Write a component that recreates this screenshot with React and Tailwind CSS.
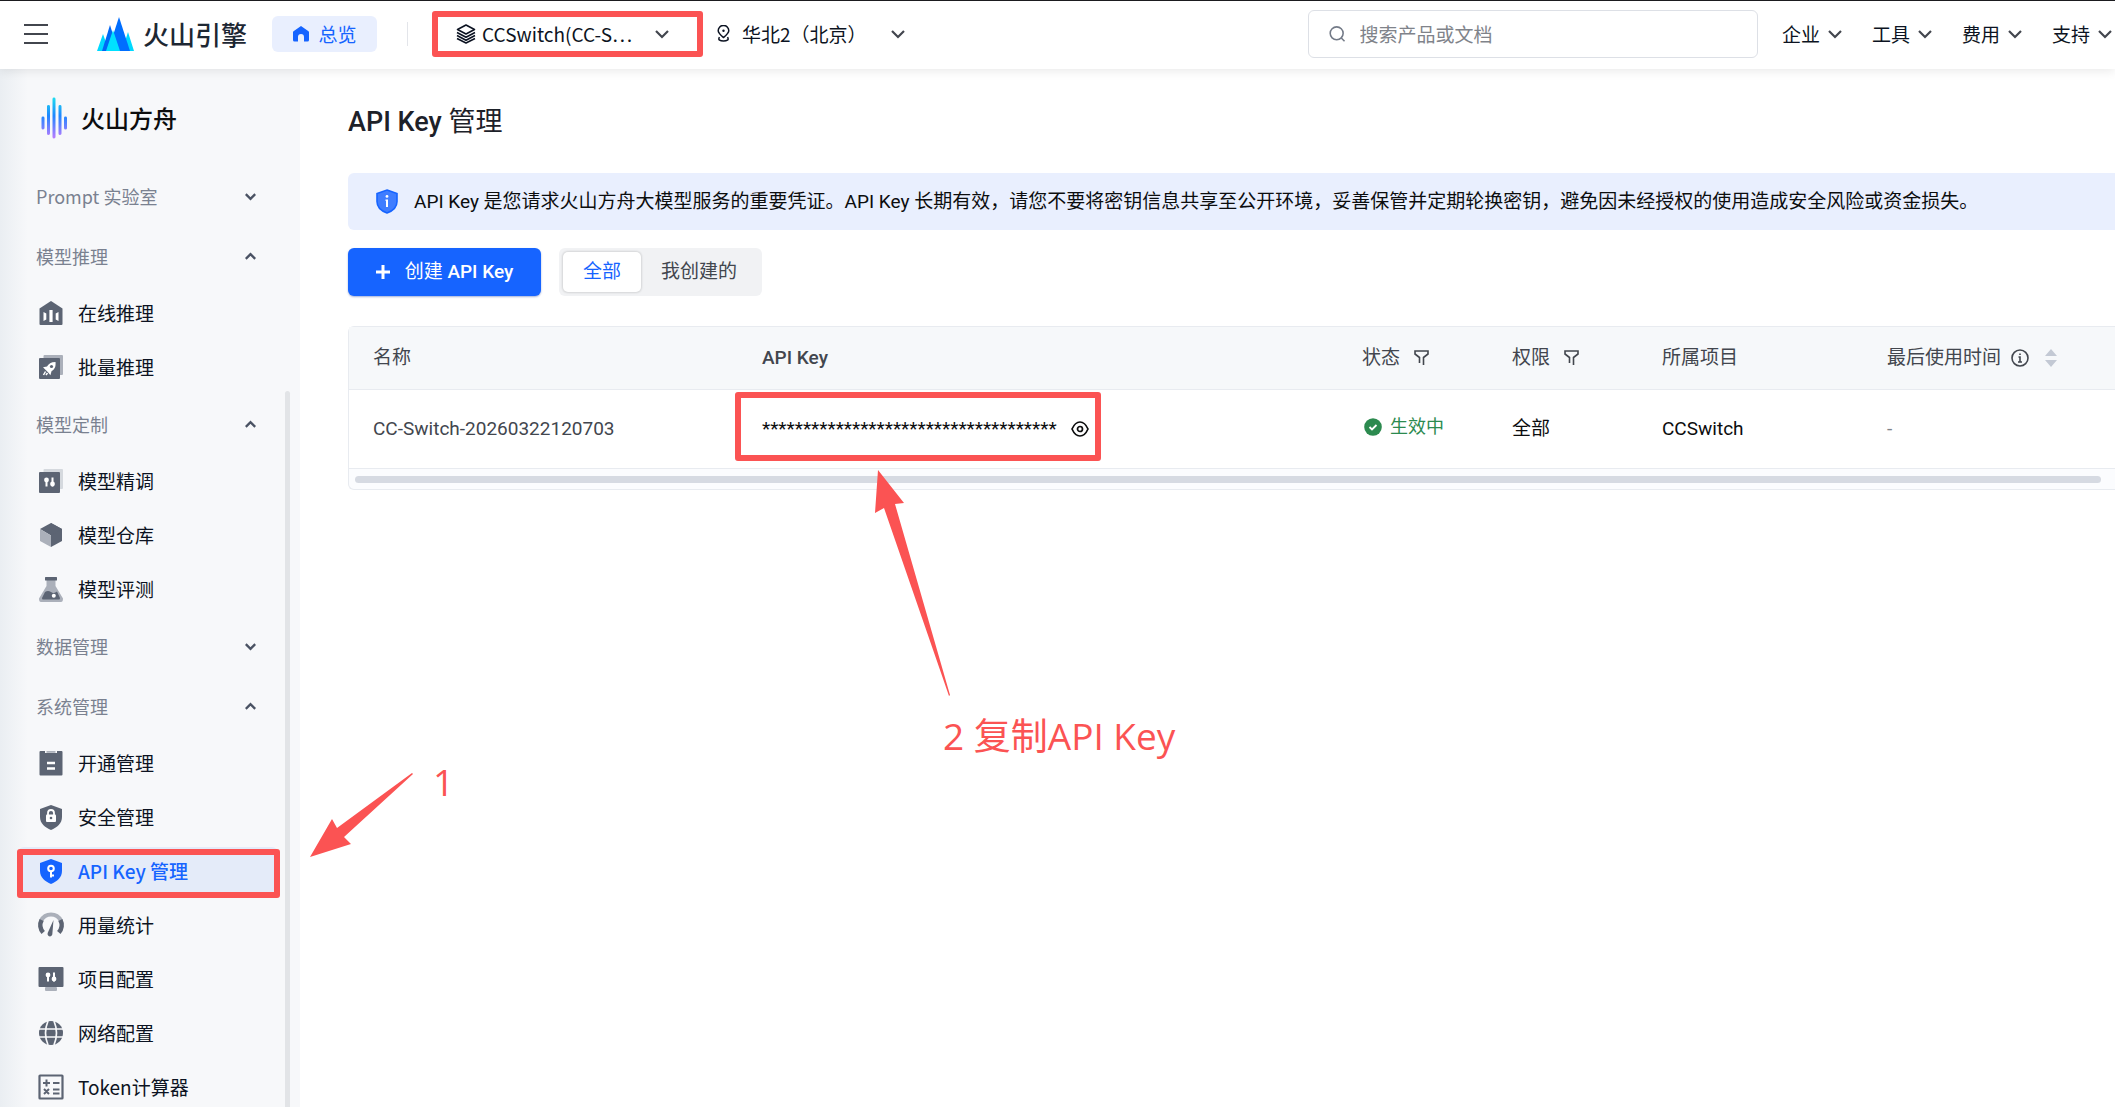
import React, { useState } from 'react';

const SLATE = '#5c6473';
const MUTED = '#abb0ba';

function Chevron({ size = 14, up = false, color = '#42464e', width = 2.2 }) {
  return (
    <svg width={size} height={size} viewBox="0 0 14 14" fill="none" stroke={color} strokeWidth={width} className="shrink-0" aria-hidden="true">
      <path d={up ? 'M1 10l6-6 6 6' : 'M1 4l6 6 6-6'} />
    </svg>
  );
}

function Sliders() {
  return (
    <g fill="none" stroke="#fff" strokeWidth="2">
      <path d="M7.5 7.5v8M13.5 6.5v9" />
      <circle cx="7.5" cy="9" r="1.4" fill="#fff" />
      <circle cx="13.5" cy="13" r="1.4" fill="#fff" />
    </g>
  );
}

const icons = {
  online: (
    <>
      <path d="M12 0l11.5 7.5V23a1 1 0 0 1-1 1h-21a1 1 0 0 1-1-1V7.5z" fill={SLATE} />
      <path d="M4.5 11l2.8 1.5v6L4.5 20zM10.4 9h3.2v12h-3.2zM19.5 11l-2.8 1.5v6l2.8 1.5z" fill="#fff" />
    </>
  ),
  batch: (
    <>
      <rect x="4.5" y="0" width="19.5" height="20" rx="1" fill={MUTED} />
      <rect x="0" y="3" width="21" height="21" rx="1" fill={SLATE} />
      <path d="M16.5 7c-4.5 0-7 1.8-8.5 4.5l-4 .8 2.2 2.2 2.8 2.8 2.4 3 1.2-4.3C15.5 14.5 17 12 16.5 7z" fill="#fff" />
      <circle cx="12.5" cy="11.5" r="1.6" fill={SLATE} />
      <path d="M6.5 16.5l-2 3.5M8.5 18l-1.5 2" stroke="#fff" strokeWidth="1.5" />
    </>
  ),
  tune: (
    <>
      <rect x="4.5" y="0" width="19.5" height="20" rx="1" fill="#d5d9de" />
      <rect x="0" y="3" width="21" height="21" rx="1" fill={SLATE} />
      <g transform="translate(0 2)"><Sliders /></g>
    </>
  ),
  store: (
    <>
      <path d="M12 0l11 6v12l-11 6z" fill={SLATE} />
      <path d="M12 0L1 6l11 6.5L23 6z" fill={SLATE} />
      <path d="M1 6l11 6.5V24L1 18z" fill={MUTED} />
    </>
  ),
  flask: (
    <>
      <path d="M7.5 3h9v6L24 21.5Q24 25 22 25H2Q0 25 0 21.5L7.5 9z" fill={MUTED} />
      <rect x="6" y="0" width="12" height="3.5" rx="0.5" fill={SLATE} />
      <path d="M6 15q3-2 6 0t6-.5l3 6.500q0 1.500-1 1.500H4q-1 0-1-1.500z" fill={SLATE} />
      <circle cx="14.8" cy="18.8" r="2" fill="#fff" />
    </>
  ),
  open: (
    <>
      <path d="M1.5 0H6v2h12V0h4.5q1 0 1 1v22.500q0 1-1 1h-21q-1 0-1-1V1q0-1 1-1z" fill={SLATE} />
      <path d="M7.5 0h9v1.8h-9z" fill={MUTED} />
      <path d="M8 12h8M8 17.5h8" stroke="#fff" strokeWidth="2.4" />
    </>
  ),
  security: (
    <>
      <path d="M12 0l11 4v8c0 6.5-5 10.500-11 13C6 22.500 1 18.500 1 12V4z" fill={SLATE} />
      <rect x="7" y="9.5" width="10" height="7.5" rx="1" fill="#fff" />
      <path d="M9 10V8a3 3 0 0 1 6 0v2" fill="none" stroke="#fff" strokeWidth="1.8" />
      <circle cx="12" cy="13" r="1.3" fill={SLATE} />
    </>
  ),
  key: (
    <>
      <path d="M12 0l11 4v8c0 6.5-5 10.500-11 13C6 22.500 1 18.500 1 12V4z" fill="#1664ff" />
      <circle cx="12" cy="9.5" r="2.8" fill="none" stroke="#fff" strokeWidth="2" />
      <path d="M12 12v6.500M12 16.500h3" stroke="#fff" strokeWidth="2" />
    </>
  ),
  usage: (
    <>
      <path d="M2.2 7.5a11 11 0 0 1 19.600 0" fill="none" stroke={MUTED} strokeWidth="4.2" />
      <path d="M2.6 7A11 11 0 0 0 4.200 19.500M21.400 7A11 11 0 0 1 19.800 19.500" fill="none" stroke={SLATE} strokeWidth="4.6" />
      <path d="M14.5 7l-1.200 14.500a2.400 2.400 0 0 1-4.600.3c-.3-1 0-1.800.3-2.600z" fill={SLATE} />
    </>
  ),
  project: (
    <>
      <rect x="-0.5" y="0" width="25" height="20" rx="1" fill={SLATE} />
      <rect x="6" y="20" width="12" height="4" rx="1" fill={MUTED} />
      <g transform="translate(1.5 -1)"><Sliders /></g>
    </>
  ),
  network: (
    <>
      <circle cx="12" cy="12" r="12" fill={SLATE} />
      <g fill="none" stroke="#f7f8fa" strokeWidth="1.7">
        <path d="M0 8h24M0 16h24" />
        <path d="M9 0Q4 12 9 24M15 0q5 12 0 24" />
      </g>
    </>
  ),
  token: (
    <>
      <rect x="0.5" y="0.5" width="23" height="23" rx="0.5" fill="none" stroke={SLATE} strokeWidth="2.2" />
      <g stroke={SLATE} strokeWidth="2">
        <path d="M4 8h7M7.5 4.5v7M14 8h6.5M14 14.5h6.5M14 18.5h6.5M5 14l5 5M10 14l-5 5" />
      </g>
    </>
  ),
};

const menu = [
  { title: 'Prompt 实验室', open: false, items: [] },
  {
    title: '模型推理',
    open: true,
    items: [
      { icon: 'online', label: '在线推理' },
      { icon: 'batch', label: '批量推理' },
    ],
  },
  {
    title: '模型定制',
    open: true,
    items: [
      { icon: 'tune', label: '模型精调' },
      { icon: 'store', label: '模型仓库' },
      { icon: 'flask', label: '模型评测' },
    ],
  },
  { title: '数据管理', open: false, items: [] },
  {
    title: '系统管理',
    open: true,
    items: [
      { icon: 'open', label: '开通管理' },
      { icon: 'security', label: '安全管理' },
      { icon: 'key', label: 'API Key 管理', active: true },
      { icon: 'usage', label: '用量统计' },
      { icon: 'project', label: '项目配置' },
      { icon: 'network', label: '网络配置' },
      { icon: 'token', label: 'Token计算器' },
    ],
  },
];

const topLinks = ['企业', '工具', '费用', '支持'];

const keys = [
  { name: 'CC-Switch-20260322120703', status: '生效中', scope: '全部', project: 'CCSwitch', lastUsed: '-' },
];

function Header() {
  return (
    <header className="relative z-10 flex h-[69px] shrink-0 items-center border-t border-[#1b1b1f] bg-white pb-[3px] shadow-[0_2px_10px_rgba(0,0,0,0.09)]">
      <button type="button" aria-label="菜单" className="ml-6 shrink-0">
        <svg width="24" height="20" viewBox="0 0 24 20" stroke="#42464e" strokeWidth="2">
          <path d="M0 1h24M0 10h24M0 19h24" />
        </svg>
      </button>
      <a href="#home" className="ml-[49px] flex shrink-0 items-center gap-[9px] text-[26px] leading-8 font-medium text-[#1d2733]">
        <svg width="37" height="34" viewBox="0 0 37 34" aria-hidden="true">
          <path d="M6 17l6 17H0zM31 15l6 19H25z" fill="#00d9ff" />
          <path d="M13 8l8 26H5z" fill="#0067f5" />
          <path d="M22 0l11 34H11z" fill="#006eff" />
          <path d="M16 13l7 21H9z" fill="#00e0ff" />
        </svg>
        火山引擎
      </a>
      <a href="#overview" className="ml-[25px] flex h-9 w-[105px] shrink-0 items-center justify-center gap-[10px] rounded-md bg-[#e9effe] text-[19px] leading-7 text-[#1664ff]">
        <svg width="16" height="16" viewBox="0 0 16 16" fill="#1664ff" aria-hidden="true">
          <path d="M8 0l7.5 5.3q.5.4.5 1V14q0 1.500-1.500 1.500H11V11a3 3 0 0 0-6 0v4.500H1.500Q0 15.500 0 14V6.300q0-.6.5-1z" />
        </svg>
        总览
      </a>
      <span className="ml-[30px] h-6 w-px shrink-0 bg-[#e3e5ea]" />
      <div className="relative ml-12 shrink-0">
        <button type="button" className="flex items-center text-[19px] leading-7 text-[#0c1322]">
          <svg width="20" height="20" viewBox="0 0 20 20" fill="none" stroke="#0c1322" strokeWidth="1.6" strokeLinejoin="round" aria-hidden="true">
            <path d="M10 1l8.5 4.5L10 10 1.5 5.5zM1 8.5l9 4.7 9-4.7M1 11.5l9 4.7 9-4.7M1 14.5l9 4.5 9-4.5" />
          </svg>
          <span className="ml-[6px] w-[173px] text-left whitespace-nowrap">CCSwitch(CC-S⋯</span>
          <Chevron />
        </button>
        <span className="pointer-events-none absolute -top-[9px] -right-[34px] -bottom-[9px] -left-6 rounded-[3px] border-6 border-[#fb5353]" />
      </div>
      <button type="button" className="ml-12 flex shrink-0 items-center text-[19px] leading-7 text-[#0c1322]">
        <svg width="13" height="17" viewBox="0 0 13 17" fill="none" stroke="#0c1322" strokeWidth="1.5" aria-hidden="true">
          <path d="M6.5 12.5C3 9.5 1.2 8 1.2 5.7a5.3 5.3 0 0 1 10.600 0c0 2.300-1.800 3.800-5.300 6.800zM2.500 12.200c-2 3 1 3.800 4 3.800s6-.8 4-3.800" />
          <circle cx="6.5" cy="5.7" r="1.2" fill="#0c1322" stroke="none" />
        </svg>
        <span className="mr-6 ml-3">华北2（北京）</span>
        <Chevron />
      </button>
      <div className="ml-auto flex shrink-0 items-center pr-[3px]">
        <label className="mr-6 flex h-12 w-[450px] items-center rounded-md border border-[#dde0e6] px-5">
          <svg width="18" height="18" viewBox="0 0 18 18" fill="none" stroke="#737a87" strokeWidth="1.7" aria-hidden="true">
            <circle cx="8.3" cy="8.3" r="7" />
            <path d="M13.3 13.3l3.5 3.5" />
          </svg>
          <input type="text" aria-label="搜索" placeholder="搜索产品或文档" className="ml-[14px] w-full text-[19px] leading-7 outline-none placeholder:text-[#80838a]" />
        </label>
        <nav className="flex gap-[30px]">
          {topLinks.map((label) => (
            <button key={label} type="button" className="flex items-center gap-2 text-[19px] leading-7 text-[#0c1322]">
              {label}
              <Chevron />
            </button>
          ))}
        </nav>
      </div>
    </header>
  );
}

function Sidebar() {
  return (
    <aside className="flex w-[300px] shrink-0 overflow-hidden bg-[#f7f8fa] bg-[linear-gradient(90deg,#eaeef2_0,#f7f8fa_28px)]">
      <div className="min-w-0 flex-1">
        <div className="flex h-[97px] items-center gap-[14px] pl-[41px] text-2xl font-medium text-[#0c0d0e]">
          <svg width="26" height="42" viewBox="0 0 26 42" fill="none" stroke="url(#ark)" strokeWidth="3" strokeLinecap="round" aria-hidden="true">
            <defs>
              <linearGradient id="ark" x1="0" y1="0" x2="0" y2="42" gradientUnits="userSpaceOnUse">
                <stop offset="0" stopColor="#1fe0ee" />
                <stop offset="0.45" stopColor="#1f86ff" />
                <stop offset="1" stopColor="#c07bff" />
              </linearGradient>
            </defs>
            <path d="M2 21l.01 10M7.5 9.5l.01 27M13 2l.01 38M19 9.500l.01 27M24.500 21l.01 10" />
          </svg>
          火山方舟
        </div>
        <nav>
          {menu.map((group) => (
            <section key={group.title}>
              <button type="button" aria-expanded={group.open} className="flex h-[60px] w-full items-center justify-between pr-[29px] pl-9 text-lg text-[#7a8190]">
                {group.title}
                <Chevron size={11} up={group.open} color="#4a5263" width={3} />
              </button>
              <ul>
                {group.items.map((item) => (
                  <li key={item.label} className="py-[3px] pr-[7px] pl-[18px]">
                    <a
                      href={`#${item.icon}`}
                      className={`flex h-12 items-center gap-[15px] rounded-md pl-[21px] text-[19px] leading-7 ${item.active ? 'bg-[#e4ebf9] font-medium text-[#1664ff]' : 'text-[#0c1322]'}`}
                    >
                      <svg width="24" height="24" viewBox="0 0 24 24" className="shrink-0 overflow-visible" aria-hidden="true">
                        {icons[item.icon]}
                      </svg>
                      {item.label}
                    </a>
                  </li>
                ))}
              </ul>
            </section>
          ))}
        </nav>
      </div>
      <div className="mt-[322px] mr-[10px] w-[5px] shrink-0 rounded-t-full bg-[#e2e4e7]" />
    </aside>
  );
}

function FilterIcon() {
  return (
    <svg width="15" height="15" viewBox="0 0 15 15" fill="none" stroke="#42464e" strokeWidth="1.6" aria-hidden="true">
      <path d="M5.5 13V7.5L1 4V1h13v3l-4.500 3.500V15" />
    </svg>
  );
}

function KeyTable() {
  return (
    <div className="mt-[30px] rounded-l-md border-y border-l border-[#e8ebf0] bg-[#fbfcfe]">
      <table className="w-full table-fixed border-collapse text-left text-[19px] leading-7">
        <colgroup>
          <col className="w-[389px]" />
          <col />
          <col className="w-[150px]" />
          <col className="w-[150px]" />
          <col className="w-[225px]" />
          <col className="w-[252px]" />
        </colgroup>
        <thead className="bg-[#f6f8fa] text-[#42464e]">
          <tr className="h-[62px] border-b border-[#e8ebf0]">
            <th className="pl-6 font-normal">名称</th>
            <th className="pl-6 font-medium">API Key</th>
            <th className="pl-6 font-normal">
              <span className="flex items-center gap-[14px]">状态 <FilterIcon /></span>
            </th>
            <th className="pl-6 font-normal">
              <span className="flex items-center gap-[14px]">权限 <FilterIcon /></span>
            </th>
            <th className="pl-6 font-normal">所属项目</th>
            <th className="pl-6 font-normal">
              <span className="flex items-center">
                最后使用时间
                <svg width="18" height="18" viewBox="0 0 18 18" fill="none" stroke="#42464e" strokeWidth="1.6" className="ml-[10px]" aria-hidden="true">
                  <circle cx="9" cy="9" r="8" />
                  <path d="M7.5 8H9v5M7 13h4M8.200 5.200h1.600" />
                </svg>
                <svg width="12" height="18" viewBox="0 0 12 18" fill="#c3c9d4" className="ml-4" aria-hidden="true">
                  <path d="M6 0l6 7H0zM6 18l6-7H0z" />
                </svg>
              </span>
            </th>
          </tr>
        </thead>
        <tbody className="bg-white text-[#0c0d0e]">
          {keys.map((row) => (
            <tr key={row.name} className="h-[79px] border-b border-[#e8ebf0]">
              <td className="pl-6 text-[#42464e]">{row.name}</td>
              <td className="pl-6">
                <span className="relative inline-flex items-center gap-[14px]">
                  {'*'.repeat(36)}
                  <button type="button" aria-label="显示">
                    <svg width="18" height="16" viewBox="0 0 18 16" fill="none" stroke="#0c0d0e" strokeWidth="1.7" aria-hidden="true">
                      <path d="M1 8c2-4.5 4.5-7 8-7s6 2.500 8 7c-2 4.500-4.500 7-8 7S3 12.500 1 8z" />
                      <circle cx="9" cy="8" r="2.5" />
                    </svg>
                  </button>
                  <span className="pointer-events-none absolute -top-[23px] -right-3 -bottom-[18px] -left-[27px] rounded-[3px] border-6 border-[#fb5353]" />
                </span>
              </td>
              <td className="pb-1 pl-6">
                <span className="flex items-center gap-2 text-lg text-[#2c8a4f]">
                  <svg width="18" height="18" viewBox="0 0 18 18" className="ml-[2px]" aria-hidden="true">
                    <circle cx="9" cy="9" r="8.8" fill="#2c8a4f" />
                    <path d="M5.5 9l2.5 2.5 4.500-4.500" fill="none" stroke="#fff" strokeWidth="1.8" />
                  </svg>
                  {row.status}
                </span>
              </td>
              <td className="pl-6">{row.scope}</td>
              <td className="pl-6">{row.project}</td>
              <td className="pl-6 text-[#80838a]">{row.lastUsed}</td>
            </tr>
          ))}
        </tbody>
      </table>
      <div className="mt-[7px] mr-[14px] mb-[6px] ml-[6px] h-[7px] rounded-full bg-[#d6dae2]" />
    </div>
  );
}

function KeyPage() {
  const [tab, setTab] = useState('全部');

  return (
    <main className="min-w-0 flex-1 overflow-hidden bg-white pl-12 font-[Roboto,'Noto_Sans_CJK_SC',sans-serif]">
      <h1 className="pt-[35px] text-[27px] leading-9 font-medium text-[#1d2129]">
        API Key <span className="font-normal">管理</span>
      </h1>
      <div className="mt-[33px] flex h-[57px] items-center gap-4 rounded-l-md bg-[#e9effe] pl-7 text-[19px] leading-7 whitespace-nowrap text-[#0c0d0e]">
        <svg width="22" height="25" viewBox="0 0 22 25" className="shrink-0" aria-hidden="true">
          <path d="M11 1l10 3.5v8c0 6-4.500 9.500-10 11.500C5.500 22 1 18.500 1 12.500v-8z" fill="#3f7dff" stroke="#1664ff" strokeWidth="1.6" />
          <path d="M9.5 10.500H12V18H10v-6H9.500z" fill="#fff" />
          <circle cx="11" cy="7.4" r="1.4" fill="#fff" />
        </svg>
        <p>API Key 是您请求火山方舟大模型服务的重要凭证。API Key 长期有效，请您不要将密钥信息共享至公开环境，妥善保管并定期轮换密钥，避免因未经授权的使用造成安全风险或资金损失。</p>
      </div>
      <div className="mt-[18px] flex gap-[18px] text-[19px] leading-7">
        <button type="button" className="flex h-12 w-[193px] items-center justify-center gap-[15px] rounded-md bg-[#1664ff] font-medium text-white shadow-[0_1px_2px_rgba(22,60,160,0.4)]">
          <svg width="14" height="14" viewBox="0 0 14 14" stroke="#fff" strokeWidth="3" aria-hidden="true">
            <path d="M0 7h14M7 0v14" />
          </svg>
          <span><span className="font-normal">创建</span> API Key</span>
        </button>
        <div className="flex h-12 w-[203px] rounded-md bg-[#f1f2f4] p-1">
          {['全部', '我创建的'].map((name) => (
            <button
              key={name}
              type="button"
              onClick={() => setTab(name)}
              className={`shrink-0 rounded-[5px] px-5 ${tab === name ? 'bg-white text-[#1664ff] shadow-[0_0_2px_1px_rgba(0,0,0,0.12)]' : 'text-[#42464e]'}`}
            >
              {name}
            </button>
          ))}
        </div>
      </div>
      <KeyTable />
    </main>
  );
}

// Red call-outs that lie over the console
function Notes() {
  return (
    <div className="pointer-events-none absolute inset-0 z-20 font-['Open_Sans','Noto_Sans_CJK_SC',sans-serif] text-[37px] leading-[54px] text-[#fb5353]">
      <svg width="1200" height="900" viewBox="0 0 1200 900" fill="#fb5353" className="absolute top-0 left-0" aria-hidden="true">
        <path d="M310 857l22-38 5 9 75-55 1 1-69 63 7 7z" />
        <path d="M878 470l26 33-9 1 55 191-1 1-65-188-9 5z" />
      </svg>
      <span className="absolute top-[849px] left-[17px] h-[49px] w-[263px] rounded-[3px] border-6 border-[#fb5353]" />
      <span className="absolute top-[755px] left-[433px]">1</span>
      <span className="absolute top-[709px] left-[943px]">2 复制API Key</span>
    </div>
  );
}

export default function App() {
  return (
    <div className="relative flex h-screen flex-col overflow-hidden bg-white font-['Noto_Sans_CJK_SC',sans-serif]">
      <Header />
      <div className="flex min-h-0 flex-1">
        <Sidebar />
        <KeyPage />
      </div>
      <Notes />
    </div>
  );
}
